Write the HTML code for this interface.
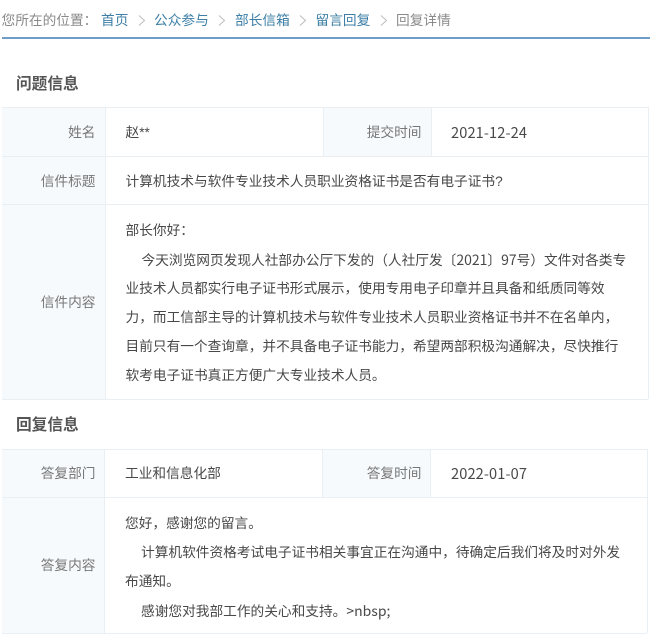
<!DOCTYPE html>
<html lang="zh-CN">
<head>
<meta charset="utf-8">
<title>回复详情</title>
<style>
html,body{margin:0;padding:0;background:#fff;}
body{width:650px;height:638px;overflow:hidden;position:relative;font-family:"Liberation Sans","Noto Sans CJK SC",sans-serif;font-size:13.7px;color:#484848;}
#p{position:absolute;left:0;top:0;width:650px;height:638px;filter:blur(.35px);}
.a{position:absolute;white-space:nowrap;line-height:20px;margin-top:1px;margin-left:-.5px;}
.bg{position:absolute;background:#f7fafd;}
.h{position:absolute;background:#e9eff2;height:1px;}
.v{position:absolute;background:#e9eff2;width:1px;}
.l{color:#3d7fa6;}
.g{color:#8a8a8a;}
.t{font-size:15.7px;font-weight:bold;color:#555;margin-top:2px;margin-left:0;}
.k{color:#777;text-align:right;margin-left:.5px;}
.n{font-family:"Noto Sans CJK SC",sans-serif;font-size:14.6px;letter-spacing:.12px;}
.m{font-family:"Noto Sans CJK SC",sans-serif;font-size:14px;}
svg{position:absolute;}
</style>
</head>
<body>
<div id="p">
<div class="a g" style="left:2px;top:10px;">您所在的位置：</div>
<div class="a l" style="left:101.5px;top:10px;">首页</div>
<svg style="left:138px;top:15px" width="8" height="11"><path d="M1 .5 L6.5 5.5 L1 10.5" fill="none" stroke="#bcbcbc"/></svg>
<div class="a l" style="left:154.5px;top:10px;">公众参与</div>
<svg style="left:218px;top:15px" width="8" height="11"><path d="M1 .5 L6.5 5.5 L1 10.5" fill="none" stroke="#bcbcbc"/></svg>
<div class="a l" style="left:235.5px;top:10px;">部长信箱</div>
<svg style="left:299px;top:15px" width="8" height="11"><path d="M1 .5 L6.5 5.5 L1 10.5" fill="none" stroke="#bcbcbc"/></svg>
<div class="a l" style="left:316px;top:10px;">留言回复</div>
<svg style="left:380px;top:15px" width="8" height="11"><path d="M1 .5 L6.5 5.5 L1 10.5" fill="none" stroke="#bcbcbc"/></svg>
<div class="a g" style="left:396.5px;top:10px;">回复详情</div>
<div style="position:absolute;left:2px;top:37px;width:648px;height:2px;background:#6f9cc9;"></div>

<div class="a t" style="left:16px;top:73px;">问题信息</div>
<div class="bg" style="left:2px;top:107px;width:103px;height:292px;"></div>
<div class="bg" style="left:323px;top:107px;width:108px;height:49px;"></div>
<div class="h" style="left:2px;top:107px;width:646px;"></div>
<div class="h" style="left:2px;top:156px;width:646px;"></div>
<div class="h" style="left:2px;top:204px;width:646px;"></div>
<div class="h" style="left:2px;top:399px;width:646px;"></div>
<div class="v" style="left:105px;top:107px;height:292px;"></div>
<div class="v" style="left:323px;top:107px;height:49px;"></div>
<div class="v" style="left:431px;top:107px;height:49px;"></div>
<div class="v" style="left:648px;top:107px;height:292px;"></div>
<div class="a k" style="left:2px;width:93px;top:122px;">姓名</div>
<div class="a" style="left:126px;top:122px;">赵**</div>
<div class="a k" style="left:323px;width:98px;top:122px;">提交时间</div>
<div class="a" style="left:451.5px;top:122px;"><span class="n">2021-12-24</span></div>
<div class="a k" style="left:2px;width:93px;top:171px;">信件标题</div>
<div class="a" style="left:126px;top:171px;">计算机技术与软件专业技术人员职业资格证书是否有电子证书?</div>
<div class="a k" style="left:2px;width:93px;top:292px;">信件内容</div>
<div class="a" style="left:126px;top:220px;">部长你好：</div>
<div class="a" style="left:142px;top:249px;">今天浏览网页发现人社部办公厅下发的（人社厅发〔<span class="m">2021</span>〕<span class="m">97</span>号）文件对各类专</div>
<div class="a" style="left:126px;top:278px;">业技术人员都实行电子证书形式展示，使用专用电子印章并且具备和纸质同等效</div>
<div class="a" style="left:126px;top:307px;">力，而工信部主导的计算机技术与软件专业技术人员职业资格证书并不在名单内，</div>
<div class="a" style="left:126px;top:336px;">目前只有一个查询章，并不具备电子证书能力，希望两部积极沟通解决，尽快推行</div>
<div class="a" style="left:126px;top:365px;">软考电子证书真正方便广大专业技术人员。</div>

<div class="a t" style="left:16px;top:414px;">回复信息</div>
<div class="bg" style="left:2px;top:449px;width:102px;height:184px;"></div>
<div class="bg" style="left:322px;top:449px;width:108px;height:48px;"></div>
<div class="h" style="left:2px;top:449px;width:645px;"></div>
<div class="h" style="left:2px;top:497px;width:645px;"></div>
<div class="h" style="left:2px;top:633px;width:645px;"></div>
<div class="v" style="left:104px;top:449px;height:184px;"></div>
<div class="v" style="left:322px;top:449px;height:48px;"></div>
<div class="v" style="left:430px;top:449px;height:48px;"></div>
<div class="v" style="left:647px;top:449px;height:184px;"></div>
<div class="a k" style="left:2px;width:93px;top:463px;">答复部门</div>
<div class="a" style="left:125.5px;top:463px;">工业和信息化部</div>
<div class="a k" style="left:322px;width:99px;top:463px;">答复时间</div>
<div class="a" style="left:451.5px;top:463px;"><span class="n">2022-01-07</span></div>
<div class="a k" style="left:2px;width:93px;top:555px;">答复内容</div>
<div class="a" style="left:125.5px;top:513px;">您好，感谢您的留言。</div>
<div class="a" style="left:141.5px;top:542px;">计算机软件资格考试电子证书相关事宜正在沟通中，待确定后我们将及时对外发</div>
<div class="a" style="left:125.5px;top:571px;">布通知。</div>
<div class="a" style="left:141.5px;top:600px;">感谢您对我部工作的关心和支持。<span class="m">&gt;nbsp;</span></div>
</div>
</body>
</html>
